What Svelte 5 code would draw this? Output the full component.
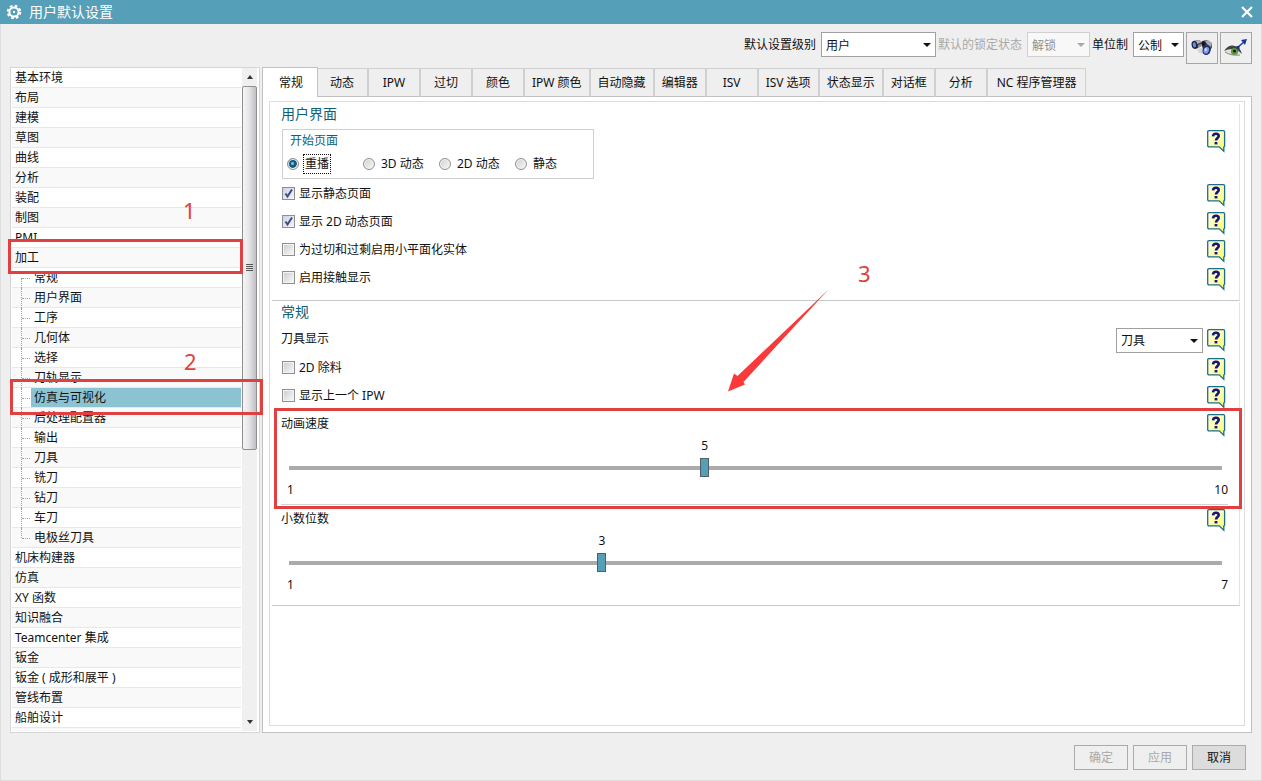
<script lang="ts">
  type Row = { label: string; child?: boolean };

  const child = (label: string): Row => ({ label, child: true });
  const top = (label: string): Row => ({ label });

  const rows: Row[] = [
    ...['基本环境', '布局', '建模', '草图', '曲线', '分析', '装配', '制图', 'PMI', '加工'].map(top),
    ...[
      '常规', '用户界面', '工序', '几何体', '选择', '刀轨显示', '仿真与可视化',
      '后处理配置器', '输出', '刀具', '铣刀', '钻刀', '车刀', '电极丝刀具',
    ].map(child),
    ...[
      '机床构建器', '仿真', 'XY 函数', '知识融合', 'Teamcenter 集成', '钣金',
      '钣金 ( 成形和展平 )', '管线布置', '船舶设计',
    ].map(top),
  ];

  const tabs = [
    '常规', '动态', 'IPW', '过切', '颜色', 'IPW 颜色', '自动隐藏', '编辑器', 'ISV',
    'ISV 选项', '状态显示', '对话框', '分析', 'NC 程序管理器',
  ];

  const startPages = ['重播', '3D 动态', '2D 动态', '静态'];

  let selectedRow = $state('仿真与可视化');
  let activeTab = $state(0);
  let startPage = $state('重播');

  let viewOptions = $state([
    { label: '显示静态页面', checked: true },
    { label: '显示 2D 动态页面', checked: true },
    { label: '为过切和过剩启用小平面化实体', checked: false },
    { label: '启用接触显示', checked: false },
  ]);

  let toolOptions = $state([
    { label: '2D 除料', checked: false },
    { label: '显示上一个 IPW', checked: false },
  ]);

  let sliders = $state([
    { id: 'speed', label: '动画速度', min: 1, max: 10, value: 5 },
    { id: 'digits', label: '小数位数', min: 1, max: 7, value: 3 },
  ]);
</script>

{#snippet help()}
  <button class="help" aria-label="帮助">
    <svg width="20" height="23" viewBox="0 0 20 23">
      <defs>
        <linearGradient id="note" x1="0" y1="0" x2="1" y2="1">
          <stop offset="0" stop-color="#ffffe6" />
          <stop offset="1" stop-color="#fbfa6e" />
        </linearGradient>
      </defs>
      <path d="M2 .7H16.400Q17.600.7 17.600 2V16.200L16.800 17V21.300L12.200 16.800H2Q.7 16.800 .7 15.500V2Q.7.7 2 .7Z" fill="url(#note)" stroke="#1c6f87" stroke-width="1.3" />
      <path d="M6 6.400C6.200 4.200 7.600 3.800 9 3.800C10.900 3.800 11.700 4.800 11.700 6C11.700 7.900 9 8.100 9 10.600" fill="none" stroke="#16127e" stroke-width="2.6" />
      <rect x="7.600" y="12" width="2.800" height="2.400" fill="#16127e" />
    </svg>
  </button>
{/snippet}

{#snippet checkRow(option: { label: string; checked: boolean })}
  <div class="row">
    <label class="check">
      <input type="checkbox" bind:checked={option.checked} />
      <span>{option.label}</span>
    </label>
    {@render help()}
  </div>
{/snippet}

<div class="window">
  <header class="titlebar">
    <svg width="16" height="16" viewBox="0 0 16 16">
      <circle cx="8" cy="8" r="6" fill="none" stroke="#fff" stroke-width="2.6" stroke-dasharray="2.6 2.11" />
      <circle cx="8" cy="8" r="4.6" fill="none" stroke="#fff" stroke-width="2" />
      <circle cx="8" cy="8" r="1.2" fill="#fff" />
    </svg>
    <h1>用户默认设置</h1>
    <button class="close" aria-label="关闭">
      <svg width="12" height="12" viewBox="0 0 12 12">
        <path d="M1 1L11 11M11 1L1 11" stroke="#fff" stroke-width="2.2" />
      </svg>
    </button>
  </header>

  <div class="toolbar">
    <label for="level">默认设置级别</label>
    <div class="select level">
      <select id="level"><option>用户</option></select>
    </div>
    <label for="lock" class="muted">默认的锁定状态</label>
    <div class="select lock">
      <select id="lock" disabled><option>解锁</option></select>
    </div>
    <label for="units">单位制</label>
    <div class="select units">
      <select id="units"><option>公制</option></select>
    </div>
    <button class="tool" aria-label="查找默认设置">
      <svg width="24" height="20" viewBox="0 0 24 20">
        <path d="M7 11L12 10L14 16L9 15Z" fill="#d2d4d8" />
        <path d="M3 3L9 2L12 4L11 8L6 11L3 10Z" fill="#3d434c" />
        <path d="M5 3L9 2L12 4L7 6Z" fill="#b4b8be" />
        <path d="M8 7L11 6L12 8L8 10Z" fill="#8b9098" />
        <path d="M12 3L17 2L22 5L22 9L19 16L14 15L12 8Z" fill="#3d434c" />
        <path d="M15 3L18 2L22 5L21 9L17 6Z" fill="#a9aeb6" />
        <path d="M11 5L14 3L16 6L13 9Z" fill="#15181d" />
        <ellipse cx="4.500" cy="6.800" rx="2.900" ry="3.900" transform="rotate(-12 4.500 6.800)" fill="#1a2347" />
        <ellipse cx="4.400" cy="6.800" rx="1.600" ry="2.600" transform="rotate(-12 4.400 6.800)" fill="#6f8be0" />
        <ellipse cx="16.500" cy="12.300" rx="3.900" ry="4.800" transform="rotate(20 16.500 12.300)" fill="#1f2c78" />
        <ellipse cx="16.300" cy="12.300" rx="2.600" ry="3.400" transform="rotate(20 16.300 12.300)" fill="#7d98f0" />
        <ellipse cx="15.700" cy="11.700" rx="1.200" ry="1.600" fill="#cdd9ff" />
      </svg>
    </button>
    <button class="tool" aria-label="管理当前设置">
      <svg width="24" height="20" viewBox="0 0 24 20">
        <path d="M1 14Q5 8 12 9Q16 10 17 16Q9 18 1 14Z" fill="#dfe3dc" />
        <path d="M0 13Q5 6 11 8Q16 9 18 16Q13 11 8 11Q4 11 0 13Z" fill="#3f453f" />
        <circle cx="10.500" cy="13.500" r="3.600" fill="#5f9a38" />
        <circle cx="10.500" cy="13" r="1.500" fill="#15210e" />
        <path d="M1 14Q7 18 16 17" fill="none" stroke="#7f867d" />
        <path d="M14 9L20 4" stroke="#1d3e9e" stroke-width="1.6" />
        <path d="M17 2L23 1L21 7Z" fill="#1634a8" />
        <rect x="12.500" y="8" width="3" height="3" fill="#1b3285" />
      </svg>
    </button>
  </div>

  <div class="body">
    <nav class="sidebar">
      <ul class="tree">
        {#each rows as row, i}
          <li class:child={row.child} class:last={row.child && !rows[i + 1].child} class:first={row.child && !rows[i - 1].child}>
            <button class:selected={row.child && row.label === selectedRow} onclick={() => (selectedRow = row.label)}>
              {row.label}
            </button>
          </li>
        {/each}
      </ul>
      <div class="scrollbar">
        <button class="step" aria-label="向上滚动"><span class="up"></span></button>
        <div class="rail"><div class="thumb"><i></i><i></i><i></i><i></i></div></div>
        <button class="step" aria-label="向下滚动"><span class="down"></span></button>
      </div>
    </nav>

    <main>
      <div class="tabs" role="tablist">
        {#each tabs as tab, i}
          <button role="tab" aria-selected={i === activeTab} class:active={i === activeTab} onclick={() => (activeTab = i)}>
            {tab}
          </button>
        {/each}
      </div>

      <div class="page">
        <div class="inner">
          <section class="ui">
            <h2>用户界面</h2>
            <div class="row start">
              <div class="group" role="radiogroup" aria-labelledby="start-title">
                <h3 id="start-title">开始页面</h3>
                <div class="radios">
                  {#each startPages as name}
                    <label>
                      <input type="radio" name="start" value={name} bind:group={startPage} />
                      <span class:focus={name === startPage}>{name}</span>
                    </label>
                  {/each}
                </div>
              </div>
              {@render help()}
            </div>
            {#each viewOptions as option}
              {@render checkRow(option)}
            {/each}
          </section>

          <section>
            <h2>常规</h2>
            <div class="row pick">
              <label for="tool">刀具显示</label>
              <div class="select tool-pick">
                <select id="tool"><option>刀具</option></select>
              </div>
              {@render help()}
            </div>
            {#each toolOptions as option}
              {@render checkRow(option)}
            {/each}
            {#each sliders as s}
              <div class="slider">
                <div class="row">
                  <label for={s.id}>{s.label}</label>
                  {@render help()}
                </div>
                <div class="value">
                  <output for={s.id} style="left: {((s.value - s.min) / (s.max - s.min)) * 100}%">{s.value}</output>
                </div>
                <input id={s.id} type="range" min={s.min} max={s.max} bind:value={s.value} />
                <div class="ends"><span>{s.min}</span><span>{s.max}</span></div>
              </div>
            {/each}
          </section>
        </div>
      </div>
    </main>
  </div>

  <footer>
    <button disabled>确定</button>
    <button disabled>应用</button>
    <button class="cancel">取消</button>
  </footer>

  <!-- walkthrough marks -->
  <div class="mark mark-1"></div>
  <div class="mark mark-2"></div>
  <div class="mark mark-3"></div>
  <span class="num num-1">1</span>
  <span class="num num-2">2</span>
  <span class="num num-3">3</span>
  <svg class="arrow" width="102" height="104" viewBox="0 0 102 104">
    <path d="M100.500 .5L15.500 93L17 95.500L0 102.500L6 84.500L9.500 87Z" fill="#fa3a3a" />
  </svg>
</div>

<style>
  :global(body) {
    background: #efefef;
  }

  .window {
    position: relative;
    box-sizing: border-box;
    height: 100vh;
    min-height: 700px;
    display: flex;
    flex-direction: column;
    overflow: hidden;
    background: #efefef;
    color: #111;
    font: 12px/20px 'Noto Sans', 'Noto Sans CJK SC', sans-serif;
    box-shadow: inset 0 0 0 1px #dcdcdc;
  }

  button,
  select,
  input {
    font: inherit;
    color: inherit;
    margin: 0;
    box-sizing: border-box;
  }

  button {
    padding: 0;
    border: 0;
    background: none;
  }

  svg {
    display: block;
  }

  h1,
  h2,
  h3 {
    margin: 0;
    font-weight: 400;
  }

  .titlebar {
    flex: none;
    height: 24px;
    display: flex;
    align-items: center;
    padding: 0 9px 0 6px;
    gap: 7px;
    background: #559fb9;
    color: #fff;
  }

  .titlebar h1 {
    flex: 1;
    font-size: 14px;
  }

  .toolbar {
    flex: none;
    display: flex;
    justify-content: flex-end;
    align-items: flex-start;
    height: 35px;
    padding: 8px 10px 0;
    line-height: 25px;
  }

  .muted {
    color: #a9a9a9;
  }

  .select {
    position: relative;
    height: 25px;
  }

  .select select {
    appearance: none;
    width: 100%;
    height: 100%;
    display: block;
    padding: 0 4px;
    border: 1px solid #a0a0a0;
    border-radius: 0;
    background: #fff;
  }

  .select select:disabled {
    border-color: #d0d0d0;
    background: #f8f8f8;
    color: #909090;
    opacity: 1;
  }

  .select::after {
    content: '';
    position: absolute;
    right: 5px;
    top: 11px;
    border: 4px solid transparent;
    border-top-color: #111;
    border-bottom: 0;
    pointer-events: none;
  }

  .lock::after {
    border-top-color: #a9a9a9;
  }

  .level {
    width: 115px;
    margin: 0 2px 0 5px;
  }

  .lock {
    width: 63px;
    margin: 0 2px 0 5px;
  }

  .units {
    width: 51px;
    margin: 0 2px 0 5px;
  }

  .tool {
    width: 32px;
    height: 32px;
    display: grid;
    place-items: center;
    border: 1px solid #a6a6a6;
  }

  .tool + .tool {
    margin-left: 2px;
  }

  .body {
    flex: 1;
    min-height: 0;
    display: flex;
    gap: 2px;
    padding: 0 10px;
  }

  .sidebar {
    flex: none;
    box-sizing: border-box;
    width: 250px;
    display: flex;
    border: 1px solid #d5d5d5;
    padding: 0 2px 1px 1px;
    background: #fff;
    overflow: hidden;
  }

  .tree {
    flex: 1;
    margin: 0;
    padding: 0;
    list-style: none;
    background: repeating-linear-gradient(#fff 0 19px, #e8e8e8 19px 20px, #f9f9f9 20px 39px, #e8e8e8 39px 40px);
    overflow: hidden;
  }

  .tree li {
    position: relative;
    height: 20px;
  }

  .tree button {
    display: block;
    width: 100%;
    height: 19px;
    padding: 0 3px;
    text-align: left;
    line-height: 18px;
    white-space: nowrap;
  }

  .tree .child {
    padding-left: 19px;
  }

  .tree .child::before {
    content: '';
    position: absolute;
    left: 9px;
    top: 0;
    bottom: 0;
    border-left: 1px dotted #a0a0a0;
  }

  .tree .first::before {
    top: 10px;
  }

  .tree .last::before {
    bottom: 10px;
  }

  .tree .child::after {
    content: '';
    position: absolute;
    left: 10px;
    top: 10px;
    width: 8px;
    border-top: 1px dotted #a0a0a0;
  }

  .tree .selected {
    background: #8cc3d2;
  }

  .scrollbar {
    flex: none;
    width: 15px;
    display: flex;
    flex-direction: column;
    background: #f0f0f0;
    margin-left: 1px;
  }

  .step {
    height: 18px;
    display: grid;
    place-items: center;
  }

  .up,
  .down {
    border: 3px solid transparent;
  }

  .up {
    border-bottom: 4px solid #333;
    border-top: 0;
  }

  .down {
    border-top: 4px solid #333;
    border-bottom: 0;
  }

  .rail {
    flex: 1;
  }

  .thumb {
    box-sizing: border-box;
    height: 58%;
    display: flex;
    flex-direction: column;
    justify-content: center;
    align-items: center;
    gap: 1px;
    border: 1px solid #8f8f8f;
    border-radius: 2px;
    background: linear-gradient(90deg, #f6f6f6, #e6e6e8 45%, #bfc0c4);
  }

  .thumb i {
    width: 7px;
    height: 1px;
    background: #555;
  }

  main {
    flex: 1;
    min-width: 0;
    display: flex;
    flex-direction: column;
  }

  .tabs {
    flex: none;
    display: flex;
    align-items: flex-end;
    height: 30px;
  }

  .tabs button {
    min-width: 52px;
    height: 29px;
    padding: 0 7px;
    border: 1px solid #d0d0d0;
    border-left-width: 0;
    border-right-width: 2px;
    border-bottom-color: #c0c0c0;
    white-space: nowrap;
  }

  .tabs button:last-child {
    padding: 0 9px;
    border-right-width: 1px;
  }

  .tabs .active {
    position: relative;
    width: 56px;
    height: 30px;
    margin-right: -1px;
    padding-left: 9px;
    border: 1px solid #c0c0c0;
    border-bottom: 0;
    background: #fff;
  }

  .tabs::after {
    content: '';
    flex: 1;
    border-bottom: 1px solid #c0c0c0;
  }

  .page {
    flex: 1;
    min-height: 0;
    display: flex;
    padding: 4px 6px 6px;
    border: 1px solid #c0c0c0;
    border-top: 0;
    background: #fff;
  }

  .inner {
    flex: 1;
    border: 1px solid #dcdcdc;
    padding: 2px 4px 0 2px;
  }

  section {
    border: solid #c8c8c8;
    border-width: 0 1px 1px 0;
    border-right-color: #e4e4e4;
    padding: 0 11px 8px 9px;
    margin-bottom: 1px;
  }

  .ui {
    padding-bottom: 5px;
  }

  h2 {
    margin-bottom: 6px;
    color: #0e6078;
    font-size: 14px;
  }

  .ui h2 {
    margin-bottom: 5px;
  }

  .row {
    display: flex;
    align-items: flex-start;
    justify-content: space-between;
    height: 28px;
    line-height: 22px;
  }

  .help {
    flex: none;
    width: 20px;
    height: 23px;
    margin: 1px 1px 0 0;
  }

  .start {
    height: 54px;
  }

  .group {
    box-sizing: border-box;
    width: 312px;
    height: 50px;
    margin-left: 1px;
    padding: 1px 4px;
    border: 1px solid #d0d0d0;
  }

  h3 {
    padding-left: 3px;
    font-size: 12px;
    line-height: 20px;
    color: #0e6078;
  }

  .radios {
    display: flex;
    margin-top: 3px;
  }

  .radios label {
    flex: none;
    width: 76px;
    display: flex;
    align-items: center;
    gap: 4px;
    white-space: nowrap;
  }

  .radios span {
    padding: 0 1px;
    border: 1px dotted transparent;
    line-height: 18px;
  }

  .radios .focus {
    border-color: #111;
  }

  input[type='radio'] {
    appearance: none;
    width: 12px;
    height: 12px;
    border: 1px solid #8e8f8f;
    border-radius: 50%;
    background: linear-gradient(135deg, #cfcfcf, #fafafa);
    box-shadow: inset 0 0 0 1px #f4f4f4;
  }

  input[type='radio']:checked {
    background: radial-gradient(circle at 45% 45%, #6fc3ec 0 1px, #17587f 2px 4px, #e6e6e6 5px);
  }

  .check {
    display: flex;
    align-items: center;
    gap: 4px;
    height: 20px;
  }

  .check span {
    padding-top: 2px;
  }

  .check input {
    appearance: none;
    width: 13px;
    height: 13px;
    border: 1px solid #8e8f8f;
    background: linear-gradient(135deg, #cbcfd5, #f6f6f6) content-box, #f4f4f4;
    padding: 1px;
    margin-left: 1px;
  }

  .check input:checked {
    background:
      url("data:image/svg+xml,%3Csvg xmlns='http://www.w3.org/2000/svg' viewBox='0 0 11 11'%3E%3Cpath d='M2.500 5.500L4.500 8.500L9 1.500' fill='none' stroke='%233a4c86' stroke-width='2'/%3E%3C/svg%3E") center / 11px 11px no-repeat,
      linear-gradient(135deg, #cbd3e6, #f6f6f6);
  }

  .pick {
    height: 29px;
  }

  .pick label {
    flex: 1;
  }

  .tool-pick {
    width: 87px;
    margin-right: 4px;
  }

  .slider {
    height: 91px;
    margin-bottom: 3px;
    border-bottom: 1px solid #d4d4d4;
  }

  .slider:last-child {
    margin-bottom: 0;
    height: 89px;
    border: 0;
  }

  .slider .row {
    height: 23px;
  }

  .value {
    height: 20px;
    margin: 0 10px 0 13px;
  }

  .value output {
    position: relative;
    display: inline-block;
    width: 8px;
    margin-left: -4px;
    text-align: center;
  }

  input[type='range'] {
    appearance: none;
    display: block;
    width: calc(100% - 14px);
    height: 21px;
    margin: 1px 6px 0 8px;
    background: linear-gradient(#ababab, #ababab) center / 100% 4px no-repeat;
  }

  input[type='range']::-webkit-slider-thumb {
    appearance: none;
    box-sizing: border-box;
    width: 9px;
    height: 19px;
    border: 1px solid #4f5f66;
    background: #559fb9;
  }

  .ends {
    display: flex;
    justify-content: space-between;
    padding: 0 0 0 6px;
    margin-top: 2px;
  }

  footer {
    flex: none;
    display: flex;
    justify-content: flex-end;
    gap: 5px;
    padding: 12px 16px 11px;
  }

  footer button {
    width: 54px;
    height: 25px;
    border: 1px solid #ababab;
    color: #a9a9a9;
  }

  footer .cancel {
    background: #dcdcdc;
    color: #111;
  }

  .mark {
    position: absolute;
    box-sizing: border-box;
    border: 3px solid #e04040;
    pointer-events: none;
  }

  .mark-1 {
    left: 8px;
    top: 239px;
    width: 235px;
    height: 35px;
  }

  .mark-2 {
    left: 10px;
    top: 379px;
    width: 253px;
    height: 36px;
  }

  .mark-3 {
    left: 274px;
    right: 20px;
    top: 408px;
    height: 101px;
  }

  .num {
    position: absolute;
    color: #e04040;
    font-size: 22px;
    line-height: 24px;
  }

  .num-1 {
    left: 183px;
    top: 198px;
  }

  .num-2 {
    left: 184px;
    top: 349px;
  }

  .num-3 {
    left: 858px;
    top: 261px;
  }

  .arrow {
    position: absolute;
    left: 728px;
    top: 289px;
    pointer-events: none;
  }
</style>
